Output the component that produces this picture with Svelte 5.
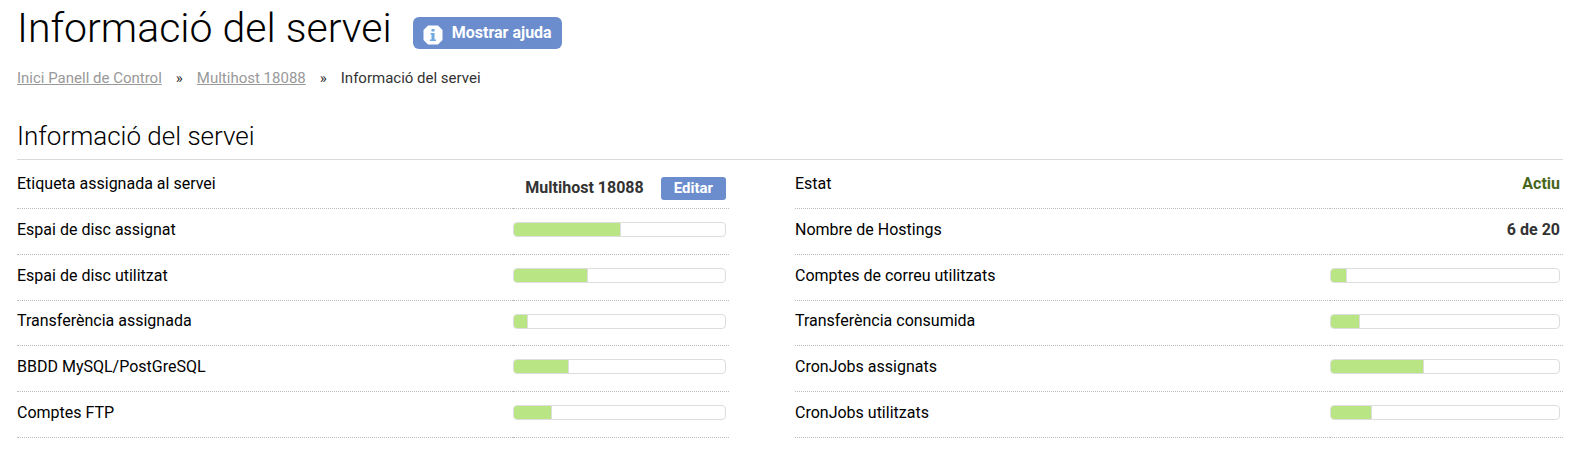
<script>
  const left = [
    { label: 'Etiqueta assignada al servei', name: 'Multihost 18088' },
    { label: 'Espai de disc assignat', value: 51 },
    { label: 'Espai de disc utilitzat', value: 35 },
    { label: 'Transferència assignada', value: 7 },
    { label: 'BBDD MySQL/PostGreSQL', value: 26 },
    { label: 'Comptes FTP', value: 18 },
  ];
  const right = [
    { label: 'Estat', text: 'Actiu', active: true },
    { label: 'Nombre de Hostings', text: '6 de 20' },
    { label: 'Comptes de correu utilitzats', value: 7 },
    { label: 'Transferència consumida', value: 13 },
    { label: 'CronJobs assignats', value: 41 },
    { label: 'CronJobs utilitzats', value: 18 },
  ];
</script>

<main>
  <header>
    <h1>Informació del servei</h1>
    <button class="help" type="button">
      <svg viewBox="0 0 20 20" aria-hidden="true">
        <path d="M5 0.5h10L19.500 5v10L15 19.500H5L0.500 15V5z" fill="#fff" />
        <path d="M8.500 4h3v2.500h-3zM7.500 8h4v6.500h1.500V16H7v-1.500h1.500v-5h-1z" fill="#6fa9e2" />
      </svg>
      Mostrar ajuda
    </button>
  </header>

  <nav aria-label="Ruta">
    <a href="#inici">Inici Panell de Control</a>
    <span>»</span>
    <a href="#multihost">Multihost 18088</a>
    <span>»</span>
    <span>Informació del servei</span>
  </nav>

  <section>
    <h2>Informació del servei</h2>
    <div class="columns">
      {#each [left, right] as rows}
        <table>
          <tbody>
            {#each rows as row}
              <tr>
                <th scope="row">{row.label}</th>
                <td>
                  {#if row.name}
                    <div class="named">
                      <strong>{row.name}</strong>
                      <button class="edit" type="button">Editar</button>
                    </div>
                  {:else if row.text}
                    <strong class:active={row.active}>{row.text}</strong>
                  {:else}
                    <div class="bar" role="meter" aria-label={row.label} aria-valuemin="0" aria-valuemax="100" aria-valuenow={row.value}>
                      <div class="fill" style="width: {row.value}%"></div>
                    </div>
                  {/if}
                </td>
              </tr>
            {/each}
          </tbody>
        </table>
      {/each}
    </div>
  </section>
</main>

<style>
  :global(body) {
    background: #fff;
    color: #000;
    font-family: Roboto, sans-serif;
    font-size: 16px;
    line-height: 20px;
  }
  main {
    padding: 0 7px 14px 17px;
  }
  header {
    display: flex;
    align-items: center;
    gap: 21px;
    padding-top: 3px;
  }
  h1, h2 {
    margin: 0;
    font-weight: 300;
  }
  h1 {
    font-size: 41px;
    line-height: 50px;
  }
  button {
    border: 0;
    background: #6c8dcd;
    color: #fff;
    font-family: inherit;
    font-weight: 700;
    cursor: pointer;
  }
  .help {
    display: flex;
    align-items: center;
    gap: 9px;
    height: 32px;
    margin-top: 10px;
    padding: 0 10px;
    border-radius: 6px;
    font-size: 16px;
    line-height: 20px;
  }
  .help svg {
    width: 20px;
    height: 20px;
    margin-top: 4px;
  }
  nav {
    display: flex;
    gap: 14px;
    margin-top: 15px;
    color: #333;
    font-size: 15px;
  }
  nav a {
    color: #999;
    text-decoration: underline;
  }
  h2 {
    margin-top: 31px;
    padding-bottom: 5px;
    border-bottom: 1px solid #d9d9d9;
    font-size: 26px;
    line-height: 35px;
  }
  .columns {
    display: grid;
    grid-template-columns: 712fr 768fr;
    gap: 66px;
  }
  table {
    width: 100%;
    border-collapse: separate;
    border-spacing: 0;
    table-layout: fixed;
  }
  th, td {
    box-sizing: border-box;
    height: 46px;
    padding: 0 0 4px;
    border-bottom: 1px dotted #bbb;
    vertical-align: middle;
  }
  tr:nth-child(4) > * {
    height: 45px;
  }
  tr:first-child > * {
    height: 49px;
    padding-bottom: 0;
  }
  th {
    width: 69.6%;
    font-weight: 400;
    text-align: left;
  }
  td {
    padding-right: 3px;
    text-align: right;
    white-space: nowrap;
  }
  strong {
    color: #333;
    font-weight: 700;
  }
  .active {
    color: #47661c;
  }
  .named {
    display: flex;
    justify-content: flex-end;
    align-items: center;
    gap: 17px;
    padding-top: 8px;
  }
  .edit {
    height: 23px;
    padding: 0 13px;
    border-radius: 3px;
    font-size: 15px;
    line-height: 20px;
  }
  .bar {
    box-sizing: border-box;
    height: 15px;
    overflow: hidden;
    border: 1px solid #ddd;
    border-radius: 4px;
    background: #fff;
  }
  .fill {
    box-sizing: border-box;
    height: 100%;
    border-right: 1px solid #ddd;
    background: #b9e585;
  }
</style>
